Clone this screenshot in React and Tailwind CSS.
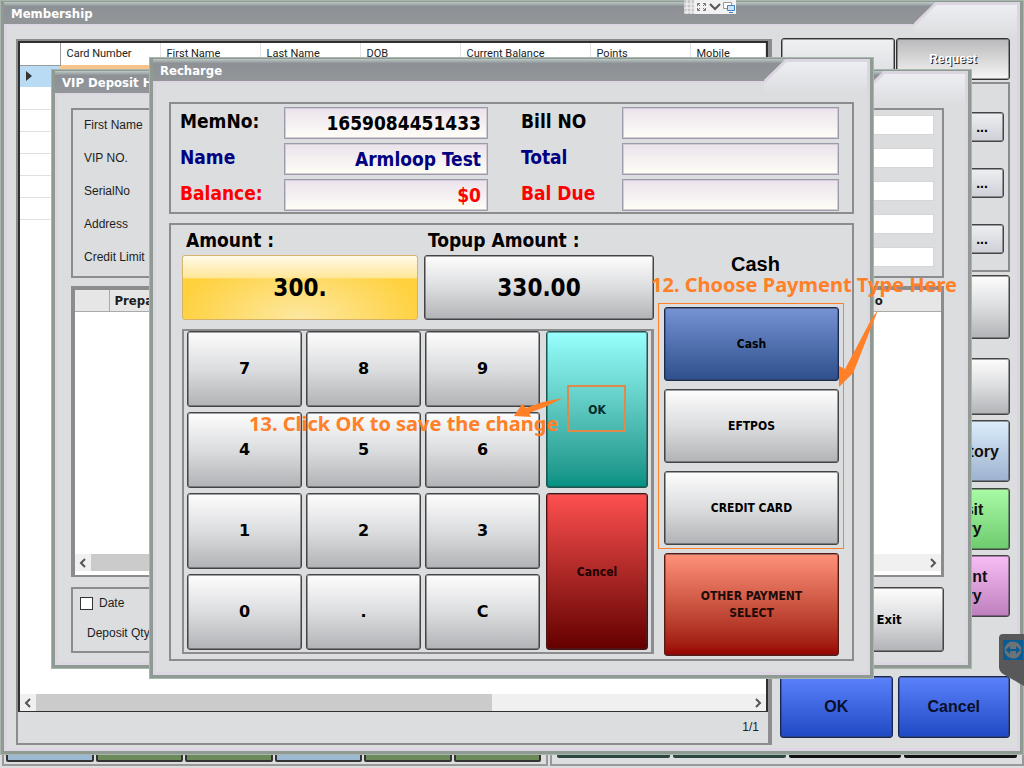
import { useId, useState } from "react";
import clsx from "clsx";

const tahoma = "font-['DejaVu_Sans_Condensed','DejaVu_Sans',sans-serif]";
const verdana = "font-['DejaVu_Sans',sans-serif]";
const arial = "font-['Liberation_Sans',Arial,sans-serif]";
const roboto = "font-['Roboto','Liberation_Sans',sans-serif]";
const segoe = "font-['Noto_Sans','Open_Sans',sans-serif]";

const silver = "bg-linear-to-b from-[#fdfdfd] via-[#dcdddf] to-[#b2b3b6]";

const members = {
  columns: ["Card Number", "First Name", "Last Name", "DOB", "Current Balance", "Points", "Mobile"],
  widths: ["w-[100px]", "w-[100px]", "w-[100px]", "w-[100px]", "w-[130px]", "w-[100px]", ""],
};

function Window({ title, className, children }) {
  return (
    <section className={clsx("absolute isolate flex flex-col border-4 border-t-2 border-[#8f9b92] bg-[#dcdddf] outline-1 -outline-offset-1 outline-[#a9b6ad]", className)}>
      <header className="relative z-10 flex h-[22px] shrink-0 justify-between bg-linear-to-b from-[#bccac5] via-[#8d9196] via-20% to-[#929699]">
        <h2 className={clsx("px-[7px] text-[13px] leading-[24px] font-bold text-white", tahoma)}>{title}</h2>
        <svg className="h-[34px] w-[106px]" viewBox="0 0 106 34">
          <defs>
            <linearGradient id="tab" x1="0" y1="0" x2="0" y2="1">
              <stop offset="0" stopColor="#edeff3" />
              <stop offset="1" stopColor="#dcdddf" />
            </linearGradient>
          </defs>
          <path d="M0 34V23L22 1H106V34Z" fill="url(#tab)" />
          <path d="M0 23L22 1.500H104.500V34" fill="none" stroke="#dcd5e2" strokeWidth="3" />
        </svg>
      </header>
      <div className="flex min-h-0 flex-1 flex-col border-[3px] border-t-2 border-[#dcd6e3]">{children}</div>
    </section>
  );
}

function PosButton({ className, children, ...rest }) {
  return (
    <button type="button" className={clsx("rounded-[3px] border shadow-[inset_0_0_0_1px_rgba(50,50,55,0.45)]", className)} {...rest}>
      {children}
    </button>
  );
}

function ScrollBar({ thumb }) {
  return (
    <div className="flex h-[17px] shrink-0 items-center bg-[#f0f0f0] text-[#555]">
      <Chevron d="M6 1L2 5L6 9" />
      <div className="h-full flex-1">
        <div className={clsx("h-full bg-[#cbcbcb]", thumb)} />
      </div>
      <Chevron d="M2 1L6 5L2 9" />
    </div>
  );
}

function Chevron({ d }) {
  return (
    <svg className="mx-[4px] h-[10px] w-[8px]" viewBox="0 0 8 10">
      <path d={d} fill="none" stroke="currentColor" strokeWidth="2" />
    </svg>
  );
}

function MemberTable() {
  return (
    <div className="flex min-h-0 flex-1 flex-col border-2 border-b border-[#2f2f2f] bg-white">
      <table className={clsx("w-full table-fixed border-collapse text-left text-[11px] text-[#222]", roboto)}>
        <thead>
          <tr className="h-[22px]">
            <th className="w-[40px] border-r border-b border-[#9b9b9b]" />
            {members.columns.map((c, i) => (
              <th key={c} className={clsx("border-r border-[#e2e2e2] pl-[6px] font-normal", members.widths[i])}>
                {c}
              </th>
            ))}
          </tr>
        </thead>
        <tbody>
          <tr className="h-[22px] bg-[#f9c48c]">
            <td className="bg-[#b9dcf4] pl-[6px]">
              <svg className="h-[10px] w-[6px]" viewBox="0 0 6 10">
                <path d="M0 0L6 5L0 10Z" fill="#333" />
              </svg>
            </td>
            <td colSpan={7} />
          </tr>
          {[1, 2, 3, 4, 5, 6].map((r) => (
            <tr key={r} className="h-[22px]">
              <td colSpan={8} className="border-b border-[#e0e0e0]" />
            </tr>
          ))}
        </tbody>
      </table>
      <div className="flex-1" />
      <ScrollBar thumb="w-[456px]" />
    </div>
  );
}

function Membership() {
  const side = "w-[112px] self-end text-[16px] leading-[19px] font-bold text-[#111]";
  return (
    <Window title="Membership" className="inset-x-0 top-0 bottom-[13px]">
      <div className="flex min-h-0 flex-1 gap-[8px] pt-[13px] pr-[7px] pb-[3px] pl-[9px]">
        <div className="flex min-w-0 flex-1 flex-col border-2 border-r-4 border-[#8c8c8e]">
          <MemberTable />
          <p className={clsx("h-[31px] pr-[9px] text-right text-[12px] leading-[31px] text-[#222]", arial)}>1/1</p>
        </div>
        <aside className={clsx("flex w-[230px] shrink-0 flex-col pb-[7px]", arial)}>
          <div className="-mt-px flex justify-end gap-px">
            <PosButton className="h-[42px] w-[114px] border-[#333] bg-linear-to-b from-[#eff0f2] to-[#dcdde0] pr-[28px] text-[18px] leading-[22px] font-bold">
              <span className="block h-[32px]">.</span>
            </PosButton>
            <PosButton className="h-[42px] w-[114px] border-[#333] bg-linear-to-b from-[#b9b9bb] to-[#f6f6f6] text-[12px] font-bold text-white [text-shadow:1px_1px_0_#222]">
              Request
            </PosButton>
          </div>
          <div className="mt-[2px] flex h-[190px] flex-col items-end gap-[26px] border-2 border-[#8c8c8e] pt-[28px] pr-[4px]">
            {[1, 2, 3].map((n) => (
              <PosButton key={n} aria-label={`Browse ${n}`} className="h-[30px] w-[44px] border-[#444] bg-linear-to-b from-[#eeeff2] to-[#cfd0d6] text-[14px] font-bold">
                ...
              </PosButton>
            ))}
          </div>
          <PosButton aria-label="New" className={clsx(side, silver, "mt-[3px] h-[64px] border-[#444]")} />
          <PosButton aria-label="Edit" className={clsx(side, silver, "mt-[19px] h-[57px] border-[#444]")} />
          <PosButton className={clsx(side, "mt-[5px] h-[62px] border-[#444] bg-linear-to-b from-[#dceefb] to-[#9db2cf]")}>
            <span className={verdana}>VIP</span> History
          </PosButton>
          <PosButton className={clsx(side, "mt-[6px] h-[62px] border-[#444] bg-linear-to-b from-[#a9fba6] to-[#6ecb6e]")}>
            Deposit
            <br />
            History
          </PosButton>
          <PosButton className={clsx(side, "mt-[5px] h-[62px] border-[#444] bg-linear-to-b from-[#f9bdf6] to-[#bd80bd]")}>
            Payment
            <br />
            History
          </PosButton>
          <div className="mt-auto flex gap-[5px] text-[16px] font-bold text-[#0a0f2a]">
            <PosButton className="h-[62px] flex-1 border-[#1b2650] bg-linear-to-b from-[#5b82fb] to-[#1f48c4]">OK</PosButton>
            <PosButton className="h-[62px] flex-1 border-[#1b2650] bg-linear-to-b from-[#5b82fb] to-[#1f48c4]">Cancel</PosButton>
          </div>
        </aside>
      </div>
    </Window>
  );
}

function DepositHistory() {
  const id = useId();
  return (
    <Window title="VIP Deposit History" className="top-[69px] left-[51px] h-[600px] w-[921px]">
      <div className={clsx("flex flex-1 flex-col px-[13px] pt-[13px] text-[12px] text-[#1d1d1d]", arial)}>
        <div className="mr-[8px] flex h-[170px] flex-col gap-[13px] border-2 border-[#8c8c8e] px-[8px] pt-[5px]">
          {["First Name", "VIP NO.", "SerialNo", "Address", "Credit Limit"].map((l) => (
            <div key={l} className="flex h-[20px] items-center justify-between pl-[3px]">
              <label htmlFor={id + l}>{l}</label>
              <input id={id + l} className="h-[20px] w-[770px] border border-[#d6d6d6] bg-white px-1" />
            </div>
          ))}
        </div>
        <div className="mt-[8px] mr-[8px] flex h-[291px] flex-col border-4 border-r-3 border-b-2 border-[#8c8c8e] bg-white pb-[4px]">
          <table className="w-full table-fixed border-collapse bg-[#e6e6e6] text-left text-[13px]">
            <thead>
              <tr className="h-[21px] border-b border-[#aaa]">
                <th className="w-[34px] border-r border-[#aaa]" />
                <th className={clsx("pl-[5px]", tahoma)}>Prepaid</th>
                <th className={clsx("w-[76px]", tahoma)}>No</th>
              </tr>
            </thead>
          </table>
          <div className="flex-1" />
          <ScrollBar thumb="w-[600px]" />
        </div>
        <div className="mt-[10px] flex h-[66px] gap-[6px]">
          <div className="flex-1 border-2 border-[#8c8c8e] pl-[7px]">
            <label className="mt-[7px] flex items-center gap-[6px] leading-[14px]">
              <input type="checkbox" className="h-[13px] w-[13px] appearance-none border border-[#333] bg-white" />
              Date
            </label>
            <p className="mt-[16px] pl-[7px] leading-[14px]">Deposit Qty</p>
          </div>
          <PosButton className={clsx("mr-[8px] h-[65px] w-[110px] border-[#444] text-[13px] font-bold text-black", silver, tahoma)}>Exit</PosButton>
        </div>
      </div>
    </Window>
  );
}

function Field({ label, value, color, narrowLabel }) {
  const id = useId();
  return (
    <div className={clsx("flex", color)}>
      <label htmlFor={id} className={clsx("shrink-0 leading-[28px]", narrowLabel ? "w-[101px]" : "w-[104px]")}>
        {label}
      </label>
      <input
        id={id}
        readOnly
        value={value}
        className="h-[32px] min-w-0 flex-1 border border-[#9c9bab] bg-linear-to-b from-[#ebe2ec] to-[#fefef6] px-[6px] text-right shadow-[inset_0_0_0_1px_#d3cbd3] outline-none"
      />
    </div>
  );
}

function Keypad({ onKey }) {
  return (
    <div className="mt-[9px] flex h-[325px] gap-[6px] border-2 border-r-3 border-[#8c8c8e] pl-[3px]">
      <div className={clsx("grid w-[353px] grid-cols-3 grid-rows-[76px_76px_76px_76px] gap-x-[4px] gap-y-[5px] text-[16px]", verdana)}>
        {["7", "8", "9", "4", "5", "6", "1", "2", "3", "0", ".", "C"].map((k) => (
          <PosButton key={k} className={clsx("border-[#444]", silver)} onClick={() => onKey(k)}>
            {k}
          </PosButton>
        ))}
      </div>
      <div className="flex w-[102px] flex-col gap-[5px] text-[12px]">
        <PosButton className="h-[157px] border-[#1d5551] bg-linear-to-b from-[#98fffd] to-[#009183] text-[#062c2b]">OK</PosButton>
        <PosButton className="h-[157px] border-[#4a1212] bg-linear-to-b from-[#ff5050] to-[#640000] text-[#200000]">Cancel</PosButton>
      </div>
    </div>
  );
}

function Recharge() {
  const [amount, setAmount] = useState("300.");

  const press = (k) => {
    if (k === "C") setAmount("");
    else setAmount((prev) => prev + k);
  };

  return (
    <Window title="Recharge" className="top-[57px] left-[149px] h-[622px] w-[725px]">
      <div className={clsx("flex flex-1 flex-col gap-[9px] px-[13px] pt-[19px] font-bold text-black", tahoma)}>
        <div className="grid h-[112px] grid-cols-[308px_318px] content-start gap-x-[33px] gap-y-[4px] border-2 border-[#8c8c8e] pt-[3px] pl-[9px] text-[19px]">
          <Field label="MemNo:" value="1659084451433" />
          <Field label="Bill NO" value="" narrowLabel />
          <Field label="Name" value="Armloop Test" color="text-[#000080]" />
          <Field label="Total" value="" color="text-[#000080]" narrowLabel />
          <Field label="Balance:" value="$0" color="text-[#fe0000]" />
          <Field label="Bal Due" value="" color="text-[#fe0000]" narrowLabel />
        </div>
        <div className="flex h-[438px] gap-[10px] border-2 border-[#8c8c8e] pl-[11px]">
          <div className="w-[472px]">
            <div className="flex h-[30px] gap-[6px] text-[19px] leading-[30px]">
              <span className="w-[236px] pl-[4px]">Amount :</span>
              <span className="pl-[4px]">Topup Amount :</span>
            </div>
            <div className="flex h-[65px] gap-[6px] text-[24px]">
              <PosButton className="w-[236px] border-[#d5b46a] bg-[linear-gradient(to_bottom,#fffbe8_0%,#ffe697_35%,transparent_36%),radial-gradient(ellipse_at_bottom,#fde8a2,#ffd13d_75%)] shadow-none">
                {amount}
              </PosButton>
              <PosButton className={clsx("w-[230px] border-[#444]", silver)}>330.00</PosButton>
            </div>
            <Keypad onKey={press} />
          </div>
          <div className="flex w-[175px] flex-col gap-[8px] text-[12px]">
            <p className={clsx("h-[74px] pt-[29px] pl-[8px] text-center text-[20px] leading-[20px]", arial)}>Cash</p>
            <PosButton className="h-[74px] border-[#1c2a4e] bg-linear-to-b from-[#7693d3] to-[#2f4f8c]">Cash</PosButton>
            <PosButton className={clsx("h-[74px] border-[#444]", silver)}>EFTPOS</PosButton>
            <PosButton className={clsx("h-[74px] border-[#444]", silver)}>CREDIT CARD</PosButton>
            <PosButton className="h-[103px] border-[#571a14] bg-linear-to-b from-[#ff9279] to-[#970000] leading-[17px] text-[#200a05]">
              OTHER PAYMENT
              <br />
              SELECT
            </PosButton>
          </div>
        </div>
      </div>
    </Window>
  );
}

// guide marks drawn over the windows
function Notes() {
  return (
    <div className={clsx("pointer-events-none text-[20px] leading-[20px] font-bold whitespace-nowrap text-[#ff8026]", segoe)}>
      <div className="absolute top-[303px] left-[658px] h-[246px] w-[186px] border border-current" />
      <div className="absolute top-[385px] left-[567px] h-[47px] w-[59px] border-2 border-[#e08a4a]" />
      <p className="absolute top-[275px] left-[651px]">12. Choose Payment Type Here</p>
      <p className="absolute top-[414px] left-[249px]">13. Click OK to save the change</p>
      <svg className="absolute top-[308px] left-[836px] h-[82px] w-[44px]" viewBox="0 0 44 82" fill="currentColor">
        <path d="M42 2L20 58L17 65L3 79L3 58L9 61L36 10Z" />
      </svg>
      <svg className="absolute top-[396px] left-[512px] h-[24px] w-[54px]" viewBox="0 0 54 24" fill="currentColor">
        <path d="M51 2L33 11L17 17L19 21L2 20L10 8L14 12L31 6Z" />
      </svg>
    </div>
  );
}

function RemoteTools() {
  return (
    <>
      <div className="absolute top-0 left-[684px] flex h-[14px] w-[52px] bg-[#f2f2f2]">
        <svg className="h-[14px] w-[52px]" viewBox="0 0 52 14" fill="none">
          <path d="M0 0H10V14H0Z" fill="#c9c9c9" />
          <path d="M0 4H10M0 8H10M0 12H10M3 0V14M7 0V14" stroke="#f5f5f5" />
          <path d="M13.500 6V3.500H16M13.500 8V10.500H16M19 3.500H21.500V6M19 10.500H21.500V8M14 4L16 6M21 4L19 6M14 10L16 8M21 10L19 8" stroke="#777" />
          <path d="M26 4L31 9L36 4" stroke="#555" strokeWidth="2" />
          <path d="M39.500 2.500H47.500V8.500H39.500Z" fill="#fff" stroke="#999" />
          <path d="M43.500 5.500H50.500V10.500H43.500ZM45 12.500H49" fill="#cfe4fb" stroke="#3d84cc" />
        </svg>
      </div>
      <svg className="absolute top-[634px] right-0 h-[52px] w-[25px]" viewBox="0 0 25 52">
        <path d="M4 0H25V52L4 40Q0 37 0 33V4Q0 0 4 0Z" fill="#58585a" />
        <path d="M4 6H24V26H4Z" fill="#0a5c93" />
        <circle cx="14" cy="16" r="8.500" fill="#6b7278" />
        <path d="M6.500 16L11 12V15H17V12L21.500 16L17 20V17H11V20Z" fill="#0a5c93" />
      </svg>
    </>
  );
}

function Desktop() {
  const colors = ["bg-[#9db8d3]", "bg-[#6c8a5a]", "bg-[#6c8a5a]", "bg-[#9db8d3]", "bg-[#6c8a5a]", "bg-[#6c8a5a]"];
  return (
    <div className="flex flex-1 items-end gap-[2px] pb-[2px] pl-[2px]">
      <div className="flex h-[20px] w-[546px] gap-[2px] border-2 border-[#999] pr-[5px] pb-[2px] pl-[2px]">
        {colors.map((c, i) => (
          <div key={i} className={clsx("flex-1 rounded-[2px] border-2 border-[#333]", c)} />
        ))}
      </div>
      <div className="flex h-[20px] flex-1 gap-[3px] border-2 border-[#999] px-[5px] pb-[6px]">
        <div className="flex-1 rounded-[2px] bg-[#2c463e]" />
        <div className="flex-1 rounded-[2px] bg-[#2c463e]" />
        <div className="flex-1 rounded-[2px] bg-[#111]" />
        <div className="flex-1 rounded-[2px] bg-[#111]" />
      </div>
    </div>
  );
}

export default function App() {
  return (
    <main className="relative flex min-h-screen w-full overflow-hidden bg-[#dcdddf]">
      <Desktop />
      <Membership />
      <DepositHistory />
      <Recharge />
      <Notes />
      <RemoteTools />
    </main>
  );
}
